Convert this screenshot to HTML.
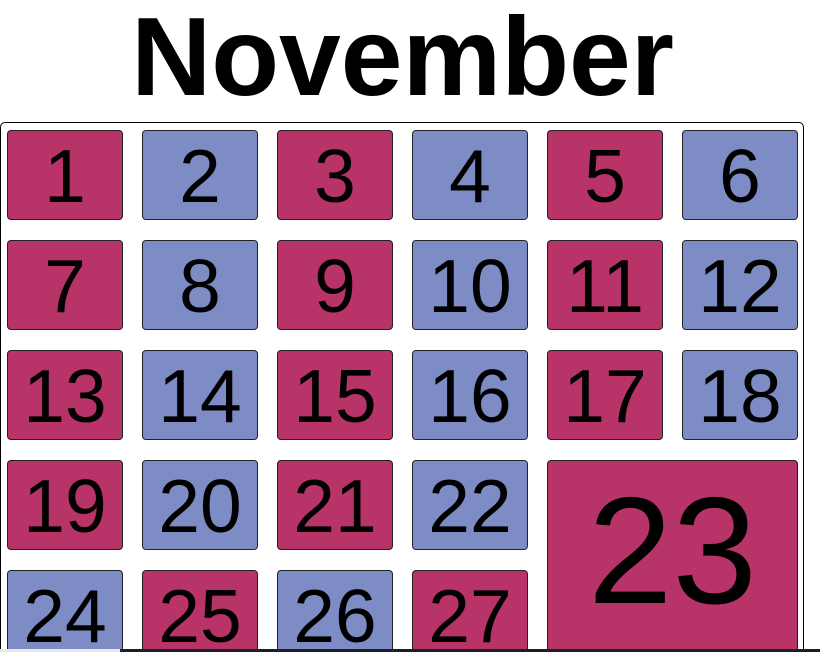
<!DOCTYPE html>
<html><head><style>
html,body{margin:0;padding:0;background:#fff;width:820px;height:652px;overflow:hidden;position:relative;font-family:"Liberation Sans",sans-serif}
h1{position:absolute;left:0;width:805px;top:-8px;margin:0;text-align:center;font-size:111px;font-weight:bold;line-height:130px}
.cal{position:absolute;left:0;top:122px;width:804px;height:560px;border:1px solid #000;border-radius:5px;box-sizing:border-box}
.d{position:absolute;width:116px;height:90px;border:1px solid #222;border-radius:4px;box-sizing:border-box;text-align:center;line-height:90px;font-size:75px;color:#000}
.r{background:#b83367}.b{background:#7e8cc6}
.bar{position:absolute;left:120px;top:649px;width:700px;height:3px;background:#1a1f2a}
.bar0{position:absolute;left:0;top:649px;width:120px;height:3px;background:#e8e8e8}
</style></head><body>
<h1>November</h1>
<div class="cal"></div>
<div class="d r" style="left:7px;top:130px">1</div>
<div class="d b" style="left:142px;top:130px">2</div>
<div class="d r" style="left:277px;top:130px">3</div>
<div class="d b" style="left:412px;top:130px">4</div>
<div class="d r" style="left:547px;top:130px">5</div>
<div class="d b" style="left:682px;top:130px">6</div>
<div class="d r" style="left:7px;top:240px">7</div>
<div class="d b" style="left:142px;top:240px">8</div>
<div class="d r" style="left:277px;top:240px">9</div>
<div class="d b" style="left:412px;top:240px">10</div>
<div class="d r" style="left:547px;top:240px">11</div>
<div class="d b" style="left:682px;top:240px">12</div>
<div class="d r" style="left:7px;top:350px">13</div>
<div class="d b" style="left:142px;top:350px">14</div>
<div class="d r" style="left:277px;top:350px">15</div>
<div class="d b" style="left:412px;top:350px">16</div>
<div class="d r" style="left:547px;top:350px">17</div>
<div class="d b" style="left:682px;top:350px">18</div>
<div class="d r" style="left:7px;top:460px">19</div>
<div class="d b" style="left:142px;top:460px">20</div>
<div class="d r" style="left:277px;top:460px">21</div>
<div class="d b" style="left:412px;top:460px">22</div>
<div class="d r" style="left:547px;top:460px;width:251px;height:210px;line-height:180px;font-size:152px">23</div>
<div class="d b" style="left:7px;top:570px">24</div>
<div class="d r" style="left:142px;top:570px">25</div>
<div class="d b" style="left:277px;top:570px">26</div>
<div class="d r" style="left:412px;top:570px">27</div>
<div class="bar0"></div>
<div class="bar"></div>
</body></html>
